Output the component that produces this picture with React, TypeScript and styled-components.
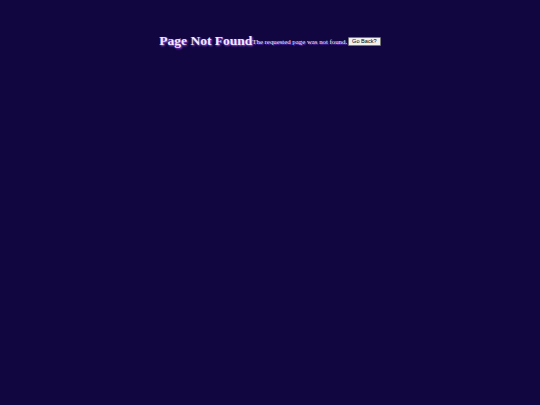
import React from 'react';
import styled, {createGlobalStyle} from 'styled-components';

const GlobalStyle = createGlobalStyle`
  html, body {
    margin: 0;
    padding: 0;
    background: #110640;
  }
`;

const Page = styled.div`
  min-height: 405px;
  background: #110640;
  font-family: "Liberation Serif", "Times New Roman", serif;
  color: #f3e8ff;
`;

const Row = styled.div`
  display: flex;
  justify-content: center;
  align-items: center;
  padding-top: 33px;
`;

const Title = styled.h1`
  margin: 0;
  font-size: 13.5px;
  font-weight: bold;
  text-shadow: 1px 1px 2px #a855f7;
`;

const Message = styled.p`
  margin: 0;
  font-size: 6.8px;
  text-shadow: 1px 1px 1px #7c3aed;
`;

const BackButton = styled.button`
  font-family: "Liberation Sans", Arial, sans-serif;
  font-size: 5.6px;
  line-height: 7px;
  padding: 0 3px;
  margin-left: 1px;
  background: #f0f0f0;
  color: #000;
  border: 1px solid #767676;
  border-radius: 1px;
  cursor: pointer;
`;

const App = () => (
  <Page>
    <GlobalStyle />
    <Row>
      <Title>Page Not Found</Title>
      <Message>The requested page was not found.</Message>
      <BackButton type="button" onClick={() => window.history.back()}>
        Go Back?
      </BackButton>
    </Row>
  </Page>
);

export default App;
